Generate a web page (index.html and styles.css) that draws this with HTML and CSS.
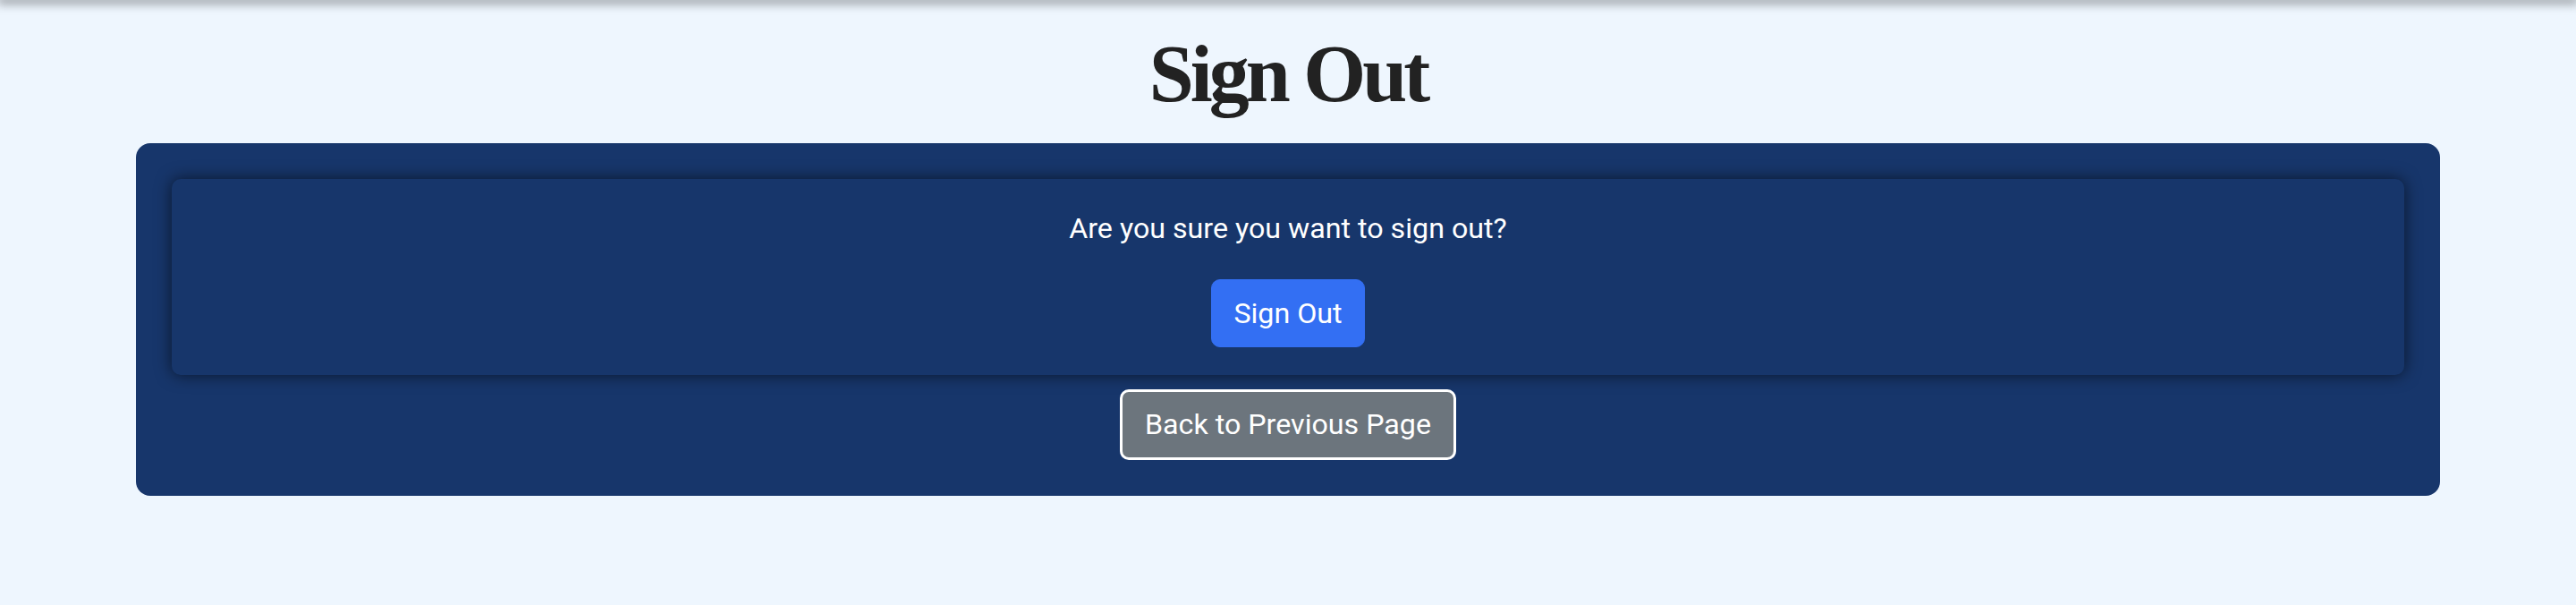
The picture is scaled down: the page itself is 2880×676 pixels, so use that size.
FILE: index.html
```html
<!DOCTYPE html>
<html lang="en">
<head>
<meta charset="utf-8">
<title>Sign Out</title>
<link rel="stylesheet" href="styles.css">
</head>
<body>
<div class="topbar"></div>
<main class="page">
  <h1 class="title">Sign Out</h1>
  <section class="card">
    <div class="confirm">
      <p class="question">Are you sure you want to sign out?</p>
      <button class="btn btn-primary" type="button">Sign Out</button>
    </div>
    <button class="btn btn-back" type="button">Back to Previous Page</button>
  </section>
</main>
</body>
</html>
```

FILE: styles.css
```css
html, body {
  margin: 0;
  padding: 0;
}
body {
  background: #eef6fe;
  font-family: Roboto, "Liberation Sans", Arial, sans-serif;
  height: 676px;
  overflow: hidden;
}
.topbar {
  height: 0;
  box-shadow: 0 0 12px 3px rgba(0, 0, 0, 0.55);
}
.page {
  display: flex;
  flex-direction: column;
}
.title {
  margin: 29px 0 23px;
  text-align: center;
  font-family: "Liberation Serif", "Times New Roman", serif;
  font-weight: 700;
  font-size: 90px;
  line-height: 108px;
  letter-spacing: -4px;
  color: #222222;
}
.card {
  margin: 0 152px;
  padding: 40px;
  background: #17366b;
  border-radius: 16px;
  display: flex;
  flex-direction: column;
  align-items: center;
  gap: 16px;
}
.confirm {
  align-self: stretch;
  background: #17366b;
  border-radius: 10px;
  box-shadow: 0 0 18px rgba(0, 0, 0, 0.6);
  padding: 31px 0 31px;
  display: flex;
  flex-direction: column;
  align-items: center;
}
.question {
  margin: 0 0 33px;
  color: #ffffff;
  font-size: 32.2px;
  line-height: 48px;
}
.btn {
  font-family: Roboto, "Liberation Sans", Arial, sans-serif;
  font-size: 32.2px;
  line-height: 48px;
  color: #ffffff;
  cursor: pointer;
}
.btn-primary {
  background: #336ff3;
  border: 1px solid #336ff3;
  border-radius: 10px;
  padding: 13px 24px;
}
.btn-back {
  background: #6c757d;
  border: 3.7px solid #ffffff;
  border-radius: 10px;
  padding: 12.3px 25px;
}
```
